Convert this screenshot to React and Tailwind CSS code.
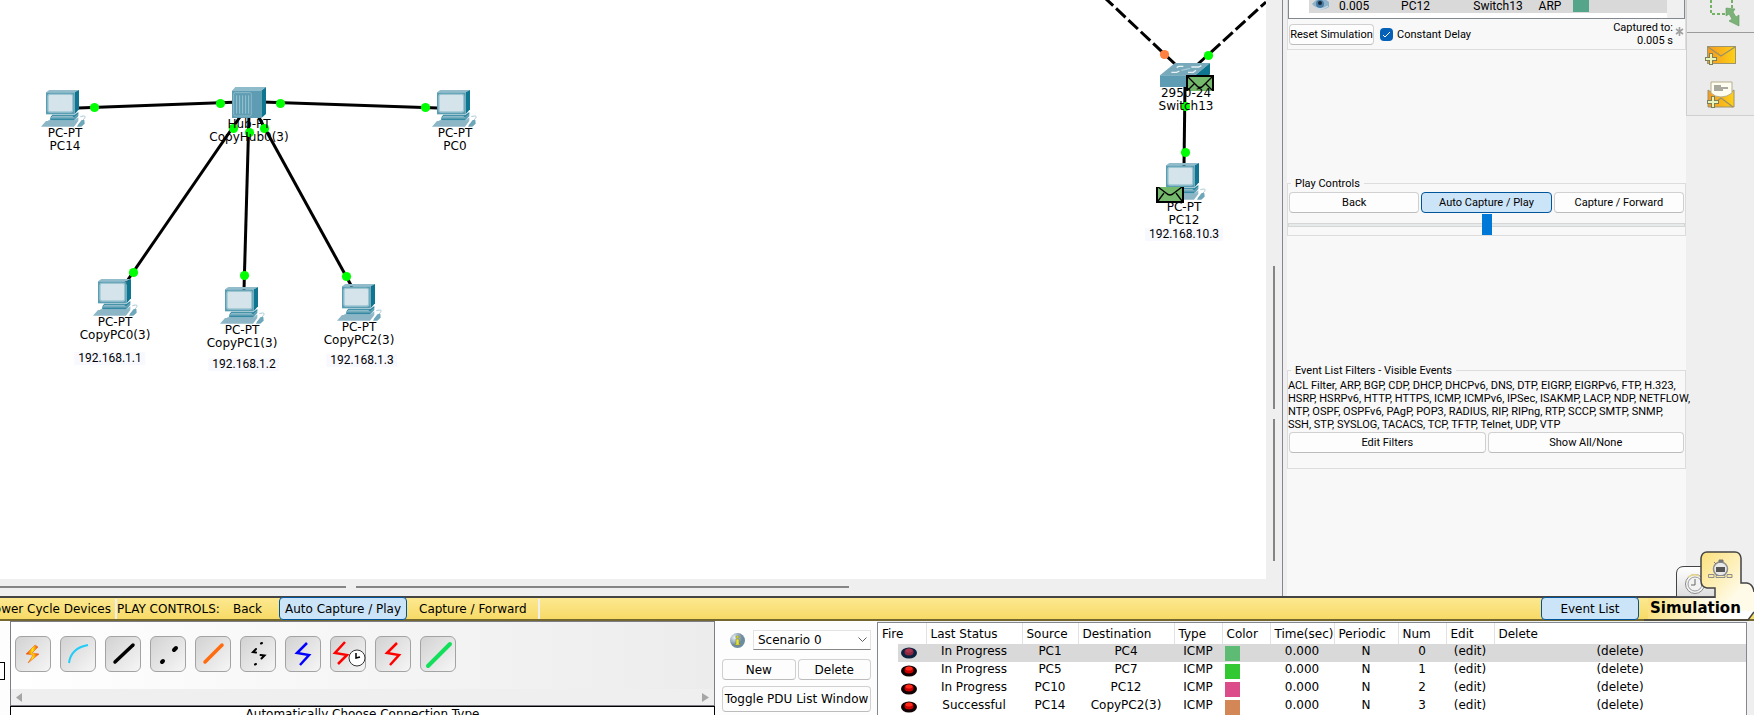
import React from 'react';

const verdana = "font-['DejaVu_Sans',sans-serif]";
const narrow = "font-['Roboto','DejaVu_Sans_Condensed',sans-serif]";

/* ---------- workspace data ---------- */

const links = [
  [78, 108, 240, 102],
  [262, 102, 438, 108],
  [242, 114, 125, 284],
  [249, 114, 244, 290],
  [257, 114, 352, 287],
  [1185, 84, 1184, 166],
];

const dashedLinks = [
  [1175, 64, 1105, -2],
  [1198, 64, 1266, 2],
];

const greenDots = [
  [94, 107], [220, 103], [280, 103], [425, 107], [233, 128], [249, 132], [264, 128],
  [133, 272], [244, 275], [346, 276], [1208, 55], [1185, 106], [1185, 152],
];

const pcs = [[41, 90], [432, 90], [93, 279], [220, 287], [337, 284], [1161, 163]];

const labels = [
  { x: 65, y: 127, lines: ['PC-PT', 'PC14'] },
  { x: 455, y: 127, lines: ['PC-PT', 'PC0'] },
  { x: 249, y: 118, lines: ['Hub-PT', 'CopyHub0(3)'] },
  { x: 115, y: 316, lines: ['PC-PT', 'CopyPC0(3)'] },
  { x: 242, y: 324, lines: ['PC-PT', 'CopyPC1(3)'] },
  { x: 359, y: 321, lines: ['PC-PT', 'CopyPC2(3)'] },
  { x: 1186, y: 87, lines: ['2950-24', 'Switch13'] },
  { x: 1184, y: 201, lines: ['PC-PT', 'PC12'] },
];

const notes = [
  { x: 110, y: 352, text: '192.168.1.1' },
  { x: 244, y: 358, text: '192.168.1.2' },
  { x: 362, y: 354, text: '192.168.1.3' },
  { x: 1184, y: 228, text: '192.168.10.3' },
];

function Pc({ x, y }) {
  return (
    <svg x={x} y={y} width="45" height="38" viewBox="0 0 135 114">
      <path d="M15 7 25 0H114L101 7Z" fill="#93bccb" />
      <path d="M101 7 114 0V58L101 73Z" fill="#0e7690" />
      <path d="M15 7H101V73H15Z" fill="#5a9db2" />
      <rect x="21" y="13" width="74" height="53" rx="6" fill="#d5e4ea" stroke="#9cc5d2" strokeWidth="4" />
      <path d="M34 74H101L112 66V72L100 82H28Z" fill="#2e869f" />
      <path d="M28 82H99L112 71V78L99 92H26Z" fill="#5a9db2" />
      <path d="M34 77H98L94 81H32Z" fill="#8db9c8" />
      <path d="M15 93H112L99 110H0Z" fill="#8cb6c6" />
      <path d="M24 90H100L112 82V93H20Z" fill="#93bccb" />
      <path d="M30 89H99" stroke="#2e869f" strokeWidth="3" />
      <path d="M108 110 112 103 122 90H130L131 101L121 110Z" fill="#6ea7ba" />
      <path d="M126 90C138 78 132 76 118 80" fill="none" stroke="#a9c9d4" strokeWidth="3" />
    </svg>
  );
}

function Hub({ x, y }) {
  return (
    <svg x={x} y={y} width="34" height="31" viewBox="0 0 102 93">
      <path d="M0 11 10 0H102L88 11Z" fill="#8fbccb" />
      <path d="M88 11 102 0V81L88 93Z" fill="#0e7690" />
      <path d="M0 11H88V93H0Z" fill="#5d9cb2" />
      <rect x="5" y="17" width="53" height="70" rx="5" fill="none" stroke="#8fbbc9" strokeWidth="3" />
      <path d="M14 25V80M23 25V80M32 25V80M41 25V80M50 25V80" stroke="#9cc5d2" strokeWidth="3" />
    </svg>
  );
}

function Switch({ x, y }) {
  return (
    <svg x={x} y={y} width="50" height="24" viewBox="0 0 150 72">
      <path d="M0 37 45 0H150L106 37Z" fill="#78aabc" />
      <path d="M106 37 150 0V34L106 72Z" fill="#0e7690" />
      <path d="M0 37H106V72H0Z" fill="#5d9cb2" />
      <path d="M50 14 56 10H70M94 12H116L124 8M34 28H50L58 24M84 28H100L108 22" fill="none" stroke="#e8f2f5" strokeWidth="4" />
      <path d="M64 22 90 16" stroke="#a5c9d4" strokeWidth="4" />
    </svg>
  );
}

/* A PDU envelope; `open` names the side that is drawn without a border. */
function Envelope({ x, y, open }) {
  return (
    <svg x={x} y={y} width="28" height="16" viewBox="0 0 28 16">
      <path d="M0 0H28V16H0Z" fill="#75ba6c" />
      <path d={open === 'bottom' ? 'M1 16V1H27V16' : 'M1 0V15H27V0'} fill="none" stroke="#000" strokeWidth="2" />
      {open === 'bottom' ? (
        <path d="M1 1 10 10Q14 15 18 10L27 1M2 15 8 9M26 15 20 9" fill="none" stroke="#000" strokeWidth="1.3" />
      ) : (
        <path d="M2 0 10 6Q14 10 18 6L26 0M2 14 8 6M26 14 20 6" fill="none" stroke="#000" strokeWidth="1.3" />
      )}
    </svg>
  );
}

function Workspace() {
  return (
    <main className="relative min-w-0 flex-1 overflow-hidden bg-white">
      <svg className="absolute inset-0 h-full w-full" aria-hidden="true">
        {links.map(([a, b, c, d], i) => (
          <line key={i} x1={a} y1={b} x2={c} y2={d} stroke="#000" strokeWidth="3" />
        ))}
        {dashedLinks.map(([a, b, c, d], i) => (
          <line key={i} x1={a} y1={b} x2={c} y2={d} stroke="#000" strokeWidth="3" strokeDasharray="13 4" />
        ))}
        <Hub x={232} y={87} />
        <Switch x={1160} y={63} />
        {pcs.map(([x, y]) => (
          <Pc key={x} x={x} y={y} />
        ))}
        {greenDots.map(([x, y]) => (
          <circle key={`${x}-${y}`} cx={x + 0.5} cy={y + 0.5} r="4.6" fill="#00ff00" />
        ))}
        <circle cx="1164.5" cy="54.5" r="4.6" fill="#ff8040" />
        <Envelope x={1186} y={75} open="bottom" />
        <Envelope x={1156} y={187} open="top" />
      </svg>
      {labels.map((l) => (
        <div
          key={l.x + l.lines[1]}
          className="absolute -translate-x-1/2 text-center text-[12px] leading-[13px] whitespace-nowrap"
          style={{ left: l.x, top: l.y }}
        >
          {l.lines.map((t) => (
            <div key={t}>{t}</div>
          ))}
        </div>
      ))}
      {notes.map((n) => (
        <div
          key={n.text}
          className={`absolute -translate-x-1/2 bg-[#f8f8ff] px-1 text-[12px] leading-[13px] whitespace-nowrap ${narrow}`}
          style={{ left: n.x, top: n.y }}
        >
          {n.text}
        </div>
      ))}
    </main>
  );
}

/* ---------- event panel ---------- */

const btn =
  'rounded border border-[#d0d0d0] border-b-[#bcbcbc] bg-[#fdfdfd] text-center whitespace-nowrap';

function Group({ title, className, children }) {
  return (
    <fieldset className={`min-w-0 border border-[#dcdcdc] ${className}`}>
      <legend className="ml-[3px] px-1 leading-[13px]">{title}</legend>
      {children}
    </fieldset>
  );
}

function EventPanel() {
  return (
    <aside className={`flex w-[399px] shrink-0 flex-col bg-[#f8f8f8] text-[11px] leading-[13px] ${narrow}`}>
      <section className="border-x border-b border-[#dcdcdc]">
        <div className="flex h-[19px] border border-t-0 border-[#828790] bg-white text-[12px]">
          <div className="flex min-w-0 flex-1 flex-col pl-5">
            <table className="h-[13px] w-full table-fixed bg-[#d9d9d9]">
              <tbody>
                <tr className="leading-[12px]">
                  <td className="w-[22px] pl-[3px] align-top">
                    <svg width="17" height="10" viewBox="0 0 17 10" role="img" aria-label="visible">
                      <path d="M0 4Q8-6 17 2V7Q8 13 0 4Z" fill="#8fb3cc" />
                      <circle cx="8" cy="4" r="4" fill="#4b7da3" />
                      <circle cx="8" cy="3" r="2" fill="#15263a" />
                      <path d="M3 7Q9 11 16 6" fill="none" stroke="#c8dae6" strokeWidth="1.5" />
                    </svg>
                  </td>
                  <td className="w-[42px] pl-2 align-top">0.005</td>
                  <td className="w-[85px] text-center align-top">PC12</td>
                  <td className="w-[80px] text-center align-top">Switch13</td>
                  <td className="w-[24px] text-center align-top">ARP</td>
                  <td className="pl-[11px] align-top">
                    <span className="block h-[12px] w-[16px] bg-[#55a58a]" />
                  </td>
                </tr>
              </tbody>
            </table>
          </div>
          <div className="w-[17px] shrink-0 bg-[#f0f0f0]" />
        </div>
        <div className="flex h-[30px] items-center pr-px pl-px">
          <button className={`h-[21px] w-[85px] ${btn}`}>Reset Simulation</button>
          <label className="ml-1.5 flex items-center gap-1">
            <span className="relative flex h-[13px] w-[13px]">
              <input type="checkbox" defaultChecked className="h-[13px] w-[13px] appearance-none rounded-sm bg-[#0560b8]" />
              <svg className="pointer-events-none absolute inset-0" width="13" height="13" viewBox="0 0 13 13" aria-hidden="true">
                <path d="m3 7 2 2 5-5" fill="none" stroke="#fff" />
              </svg>
            </span>
            Constant Delay
          </label>
          <div className="ml-auto text-right">
            Captured to:
            <br />
            0.005 s
          </div>
          <svg className="mb-1.5 ml-0.5" width="9" height="9" viewBox="0 0 9 9" aria-hidden="true">
            <path d="M4.5 0V9M1 2 8 7M8 2 1 7" stroke="#a0a0a0" strokeWidth="1.6" />
          </svg>
        </div>
      </section>

      <Group title="Play Controls" className="mt-[127px] h-[59px]">
        <div className="mt-0.5 grid grid-cols-3 gap-0.5 px-px">
          <button className={`h-[21px] ${btn}`}>Back</button>
          <button className="h-[21px] rounded border border-[#005499] bg-[#cce4f7] text-center">Auto Capture / Play</button>
          <button className={`h-[21px] ${btn}`}>Capture / Forward</button>
        </div>
        <input
          type="range"
          aria-label="Play speed"
          min="0"
          max="100"
          defaultValue="50"
          className="mt-px block h-[21px] w-full appearance-none bg-transparent [&::-webkit-slider-runnable-track]:h-1 [&::-webkit-slider-runnable-track]:border [&::-webkit-slider-runnable-track]:border-[#d6d6d6] [&::-webkit-slider-runnable-track]:bg-[#e7eaea] [&::-webkit-slider-thumb]:mt-[-10px] [&::-webkit-slider-thumb]:h-[21px] [&::-webkit-slider-thumb]:w-2.5 [&::-webkit-slider-thumb]:appearance-none [&::-webkit-slider-thumb]:bg-[#0078d7]"
        />
      </Group>

      <Group title="Event List Filters - Visible Events" className="mt-[128px] h-[105px]">
        <p className="relative mt-0.5 whitespace-nowrap">
          ACL Filter, ARP, BGP, CDP, DHCP, DHCPv6, DNS, DTP, EIGRP, EIGRPv6, FTP, H.323,
          <br />
          HSRP, HSRPv6, HTTP, HTTPS, ICMP, ICMPv6, IPSec, ISAKMP, LACP, NDP, NETFLOW,
          <br />
          NTP, OSPF, OSPFv6, PAgP, POP3, RADIUS, RIP, RIPng, RTP, SCCP, SMTP, SNMP,
          <br />
          SSH, STP, SYSLOG, TACACS, TCP, TFTP, Telnet, UDP, VTP
        </p>
        <div className="mt-px grid grid-cols-2 gap-0.5 px-px">
          <button className={`h-[21px] ${btn}`}>Edit Filters</button>
          <button className={`h-[21px] ${btn}`}>Show All/None</button>
        </div>
      </Group>
    </aside>
  );
}

/* ---------- tool sidebar ---------- */

function Plus({ x, y }) {
  return (
    <g transform={`translate(${x} ${y})`}>
      <path d="M4 0H8V4H12V8H8V12H4V8H0V4H4Z" fill="#7d7f5a" />
      <path d="M5 1H7V5H11V7H7V11H5V7H1V5H5Z" fill="#e9f5b8" />
    </g>
  );
}

function Sidebar() {
  return (
    <nav className="w-[68px] shrink-0 bg-[#efefef]">
      <div className="flex flex-col items-center border-b border-l border-[#cfcfcf] bg-[#ebebeb]">
        <button aria-label="Resize shape" className="flex h-[33px] w-full justify-center border-b border-[#9b9b9b] pl-2">
          <svg width="34" height="28" viewBox="0 0 34 28">
            <path d="M3 0V14H20M24 0V8" fill="none" stroke="#74b266" strokeWidth="2" strokeDasharray="3 2" />
            <path d="M18 8 27 9 25 12 28 17 31 15V26L21 21 24 19 21 14 18 16Z" fill="#7bb277" stroke="#5f9a60" strokeWidth="0.6" />
          </svg>
        </button>
        <button aria-label="Add simple PDU" className="mt-[13px] h-5">
          <svg width="32" height="20" viewBox="0 0 32 20">
            <rect x="2.5" y="0.5" width="28" height="17" fill="#fbbd16" stroke="#9d9470" />
            <path d="M3 1H30V17H3Z" fill="url(#env)" />
            <path d="M3 1 16 10 30 1" fill="none" stroke="#9c9066" strokeWidth="1.3" />
            <defs>
              <linearGradient id="env">
                <stop offset="0" stopColor="#f59a1f" />
                <stop offset="1" stopColor="#fdd017" />
              </linearGradient>
            </defs>
            <Plus x={0} y={7} />
          </svg>
        </button>
        <button aria-label="Add complex PDU" className="mt-[15px] mb-[6px] h-7">
          <svg width="28" height="28" viewBox="0 0 28 28">
            <path d="M1 9 4 11H24L27 9V26H1Z" fill="url(#env)" stroke="#9d9470" />
            <path d="M4 1H25V12Q20 16 14 16T4 12Z" fill="#fffdf0" stroke="#b3ad8e" />
            <path d="M7 4H14V6H21V8H16V10H7Z" fill="#aaa99f" />
            <path d="M26 26 14 17 6 23" fill="none" stroke="#9c9066" strokeWidth="1.3" />
            <Plus x={0} y={15} />
          </svg>
        </button>
      </div>
    </nav>
  );
}

/* ---------- simulation bar ---------- */

function SimulationBar() {
  return (
    <div className="relative flex h-[25px] shrink-0 items-center border-t-2 border-b-2 border-t-[#444444] border-b-[#75682f] bg-linear-to-b from-[#fce88f] to-[#f7da66] text-[12px] whitespace-nowrap">
      <a href="#power" className="flex w-[111px] shrink-0 justify-end">Power Cycle Devices</a>
      <span className="ml-1 h-5 w-0.5 bg-[#efefef]" />
      <span className="w-[115px]">PLAY CONTROLS:</span>
      <button className="w-[47px] pr-4">Back</button>
      <button className="relative h-[23px] w-[128px] rounded border border-[#005499] bg-[#cce4f7]">Auto Capture / Play</button>
      <button className="ml-3 w-[107px]">Capture / Forward</button>
      <span className="ml-3 h-5 w-0.5 bg-[#efefef]" />
      <button className="relative mr-[115px] ml-auto h-[23px] w-[98px] rounded border border-[#005499] bg-[#cce4f7]">Event List</button>
      <div className="absolute right-0 -bottom-0.5 h-[70px] w-[110px]">
        <svg className="absolute inset-0" width="110" height="70" viewBox="0 0 110 70" aria-hidden="true">
          <defs>
            <linearGradient id="simBar">
              <stop offset="0" stopColor="#fae181" />
              <stop offset="0.7" stopColor="#ffffff" />
            </linearGradient>
            <linearGradient id="simTab" x1="0" y1="0" x2="1" y2="1">
              <stop offset="0" stopColor="#fbe07a" />
              <stop offset="0.7" stopColor="#fffbe8" />
            </linearGradient>
            <linearGradient id="clockTab" x1="0" y1="0" x2="0" y2="1">
              <stop offset="0" stopColor="#ffffff" />
              <stop offset="1" stopColor="#dddddd" />
            </linearGradient>
          </defs>
          <path d="M32.5 46V22Q33 15.5 40 15.5H72V46Z" fill="url(#clockTab)" stroke="#444" />
          <circle cx="51" cy="33" r="9.5" fill="#f5f5f5" stroke="#8a8a8a" />
          <circle cx="51" cy="33" r="7" fill="#f2f2f2" stroke="#999" />
          <path d="M51 28V34H47" fill="none" stroke="#666" />
          <path d="M44 26Q50 22 55 25" fill="none" stroke="#ead98f" strokeWidth="1.5" />
          <path d="M4 47H110V62L104 68H4Z" fill="url(#simBar)" />
          <path d="M63 37Q57 36 57 30V7Q58 1 63 1H91Q96 1 97 7V32H103Q109 33 110 41V60H71V37Z" fill="url(#simTab)" />
          <path d="M71 47V37H63Q57 36 57 30V7Q58 1 63 1H91Q96 1 97 7V32H103Q109 33 110 41M0 46H71M110 61 104 69H0" fill="none" stroke="#444" strokeWidth="1.5" />
          <circle cx="76.5" cy="18" r="7" fill="#e9e9e9" stroke="#8d8d8d" strokeWidth="1.5" />
          <rect x="72" y="16" width="9" height="5" fill="#555" />
          <path d="M75 9H79V11H75ZM70 11 72 13" fill="#777" stroke="#777" />
          <path d="M64.5 23.5H70V26.5H64.5ZM83 23.5H88V26.5H83ZM72 24.5H81V26.5H72Z" fill="#f8e9a8" stroke="#8d8d8d" />
        </svg>
        <span className="absolute bottom-0.5 left-[6px] text-[15px] leading-[21px] font-bold">Simulation</span>
      </div>
    </div>
  );
}

/* ---------- bottom area ---------- */

const connections = [
  ['Automatic', <path key="p" d="M20 9 11 18 18 19 13 27 24 18 17 17 23 11Z" fill="url(#bolt)" stroke="#f26a21" strokeWidth="0.6" />],
  ['Console', <path key="p" d="M9 27Q11 12 28 9" fill="none" stroke="#22ccf7" strokeWidth="2" />],
  ['Copper straight-through', <path key="p" d="M10 26 28 9" stroke="#000" strokeWidth="3.5" strokeLinecap="round" />],
  ['Copper cross-over', <path key="p" d="M12 26 13 25M24 14 26 12" stroke="#000" strokeWidth="4" strokeLinecap="round" />],
  ['Fiber', <path key="p" d="M10 26 27 9" stroke="#ff6b0f" strokeWidth="3.5" strokeLinecap="round" />],
  ['Phone', <path key="p" d="M21 7.5 22 7M16 13 13 16 16 16.5M20.500 19 24.500 19.5 21.5 22.500M15 28.5 16 28" fill="none" stroke="#000" strokeWidth="2" strokeLinecap="round" />],
  ['Coaxial', <path key="p" d="M22 7 12 17 24 19 15 29" fill="none" stroke="#0000ff" strokeWidth="2.5" />],
  ['Serial DCE', (
    <g key="p" fill="none">
      <path d="M15 6 5 17 17 19 8 28" stroke="#f00" strokeWidth="2.5" />
      <circle cx="27" cy="22" r="8" fill="#fff" stroke="#333" />
      <path d="M26 17V22L30 21" stroke="#000" strokeWidth="1.5" />
    </g>
  )],
  ['Serial DTE', <path key="p" d="M22 7 12 17 24 19 15 29" fill="none" stroke="#f00" strokeWidth="2.5" />],
  ['Octal', <path key="p" d="M8 30 30 8" stroke="#13e05a" strokeWidth="4" strokeLinecap="round" />],
];

function ConnectionPicker() {
  return (
    <section className="flex h-full w-[705px] shrink-0 flex-col">
      <div className="flex h-[85px] shrink-0 flex-col border border-[#7d7d85] bg-linear-to-r from-white to-[#ececec]">
        <div className="flex flex-1 items-center gap-[9px] pl-1">
          {connections.map(([name, art]) => (
            <button
              key={name}
              aria-label={name}
              className="mb-1 h-9 w-9 rounded-md border border-[#a3a3a3] bg-linear-to-br from-[#d2d2d2] to-[#f6f6f6]"
            >
              <svg className="-m-px" width="36" height="36" viewBox="0 0 36 36">
                <defs>
                  <linearGradient id="bolt">
                    <stop offset="0" stopColor="#e5261f" />
                    <stop offset="0.5" stopColor="#ffe600" />
                    <stop offset="1" stopColor="#e5261f" />
                  </linearGradient>
                </defs>
                {art}
              </svg>
            </button>
          ))}
        </div>
        <div className="flex h-4 items-center justify-between bg-[#efefef] px-[5px]">
          <svg width="7" height="9" viewBox="0 0 7 9" aria-hidden="true"><path d="M6 0V9L0 4.5Z" fill="#a6a6a6" /></svg>
          <svg width="7" height="9" viewBox="0 0 7 9" aria-hidden="true"><path d="M0 0V9L7 4.5Z" fill="#a6a6a6" /></svg>
        </div>
      </div>
      <div className="flex-1 overflow-hidden border border-b-0 border-black bg-white text-center text-[12px] leading-[14px]">
        Automatically Choose Connection Type
      </div>
    </section>
  );
}

function ScenarioControls() {
  return (
    <section className="flex h-full w-[162px] shrink-0 flex-col bg-[#fdfdfd] pt-[9px] pr-1.5 pl-[7px] text-[12px]">
      <div className="flex h-[20px] items-center justify-between pl-2">
        <svg width="15" height="15" viewBox="0 0 15 15" role="img" aria-label="Scenario information">
          <defs>
            <radialGradient id="info" cx="0.3" cy="0.3">
              <stop offset="0" stopColor="#e8f0f5" />
              <stop offset="1" stopColor="#6e8ca0" />
            </radialGradient>
          </defs>
          <circle cx="7.5" cy="7.5" r="7.5" fill="url(#info)" />
          <path d="M6 3H9V5H6ZM6 6H9V11H10V12H5V11H6Z" fill="#e8e337" stroke="#7c7d2c" strokeWidth="0.5" />
        </svg>
        <span className="relative">
          <select aria-label="Scenario" className="block h-5 w-[118px] appearance-none border border-[#e3e3e3] border-b-[#868686] bg-white pl-1">
            <option>Scenario 0</option>
          </select>
          <svg className="pointer-events-none absolute top-[7px] right-1" width="9" height="6" viewBox="0 0 9 6" aria-hidden="true">
            <path d="m.5.5 4 4 4-4" fill="none" stroke="#5f5f5f" />
          </svg>
        </span>
      </div>
      <div className="mt-[9px] grid grid-cols-2 gap-0.5">
        <button className={`h-[21px] ${btn}`}>New</button>
        <button className={`h-[21px] ${btn}`}>Delete</button>
      </div>
      <button className={`mt-1.5 h-[26px] ${btn}`}>Toggle PDU List Window</button>
    </section>
  );
}

const columns = ['Fire', 'Last Status', 'Source', 'Destination', 'Type', 'Color', 'Time(sec)', 'Periodic', 'Num', 'Edit', 'Delete'];
const columnWidths = [48, 96, 56, 96, 48, 48, 64, 64, 48, 48, null];

const pdus = [
  ['In Progress', 'PC1', 'PC4', '#5dbb74', '0'],
  ['In Progress', 'PC5', 'PC7', '#32c832', '1'],
  ['In Progress', 'PC10', 'PC12', '#dc4b8a', '2'],
  ['Successful', 'PC14', 'CopyPC2(3)', '#d38757', '3'],
];

function FireButton({ selected }) {
  return (
    <button aria-label="Fire" className="mt-[3px] ml-[23px] block h-3 w-[17px]">
      <svg width="17" height="12" viewBox="0 0 17 12">
        <ellipse cx="8" cy="6" rx="8" ry="5.5" fill={selected ? '#0c2340' : '#120404'} />
        <ellipse cx="8" cy="5" rx="4.5" ry="3.5" fill={selected ? '#8c2740' : '#c80000'} />
        <ellipse cx="8" cy="3.5" rx="3.5" ry="2" fill={selected ? '#aa3450' : '#ff2a1a'} />
      </svg>
    </button>
  );
}

function PduTable() {
  return (
    <section className="mt-px mr-[7px] min-w-0 flex-1 overflow-hidden border border-b-0 border-[#828790] bg-white">
      <table className="w-full table-fixed text-[12px]">
        <colgroup>
          {columnWidths.map((w, i) => (
            <col key={i} style={w ? { width: w } : undefined} />
          ))}
        </colgroup>
        <thead>
          <tr className="h-[21px]">
            {columns.map((c) => (
              <th key={c} className="border-r border-[#e2e2e2] p-0 pl-1 text-left font-normal whitespace-nowrap last:border-r-0">{c}</th>
            ))}
          </tr>
        </thead>
        <tbody>
          {pdus.map(([status, source, destination, color, num], i) => {
            const tint = i === 0 ? 'bg-[#d9d9d9]' : '';
            const cell = `p-0 pb-1 text-center leading-[14px] whitespace-nowrap ${tint}`;
            return (
              <tr key={num} className="h-[18px]">
                <td className={`p-0 align-top ${i === 0 ? 'bg-linear-to-r from-white from-[20px] to-[#d9d9d9] to-[20px]' : ''}`}>
                  <FireButton selected={i === 0} />
                </td>
                <td className={cell}>{status}</td>
                <td className={cell}>{source}</td>
                <td className={cell}>{destination}</td>
                <td className={cell}>ICMP</td>
                <td className={`p-0 align-top ${tint}`}>
                  <span className="mt-0.5 ml-[3px] block h-[15px] w-[15px]" style={{ backgroundColor: color }} />
                </td>
                <td className={cell}>0.000</td>
                <td className={cell}>N</td>
                <td className={cell}>{num}</td>
                <td className={cell}><a href="#edit">(edit)</a></td>
                <td className={cell}><a href="#delete">(delete)</a></td>
              </tr>
            );
          })}
        </tbody>
      </table>
    </section>
  );
}

export default function App() {
  return (
    <div className={`flex h-screen flex-col overflow-hidden bg-[#efefef] text-black ${verdana}`}>
      <div className="flex min-h-0 flex-1">
        <div className="flex min-w-0 flex-1 flex-col border-r border-[#828790]">
          <div className="flex min-h-0 flex-1">
            <Workspace />
            <div className="flex w-4 shrink-0 flex-col items-center gap-2.5 pt-[266px] pb-[18px]">
              <span className="w-0.5 flex-1 bg-[#858585]" />
              <span className="w-0.5 flex-1 bg-[#858585]" />
            </div>
          </div>
          <div className="flex h-[17px] shrink-0 items-center gap-2.5 pr-[433px] pb-px">
            <span className="h-0.5 w-[346px] bg-[#858585]" />
            <span className="h-0.5 flex-1 bg-[#858585]" />
          </div>
        </div>
        <div className="w-1 shrink-0" />
        <EventPanel />
        <Sidebar />
      </div>
      <SimulationBar />
      <div className="flex h-[94px] shrink-0">
        <div className="w-2.5 shrink-0 bg-[#fdfdfd] pt-[41px]">
          <div className="h-[18px] w-[5px] border border-l-0 border-black bg-white" />
        </div>
        <ConnectionPicker />
        <ScenarioControls />
        <PduTable />
      </div>
    </div>
  );
}
